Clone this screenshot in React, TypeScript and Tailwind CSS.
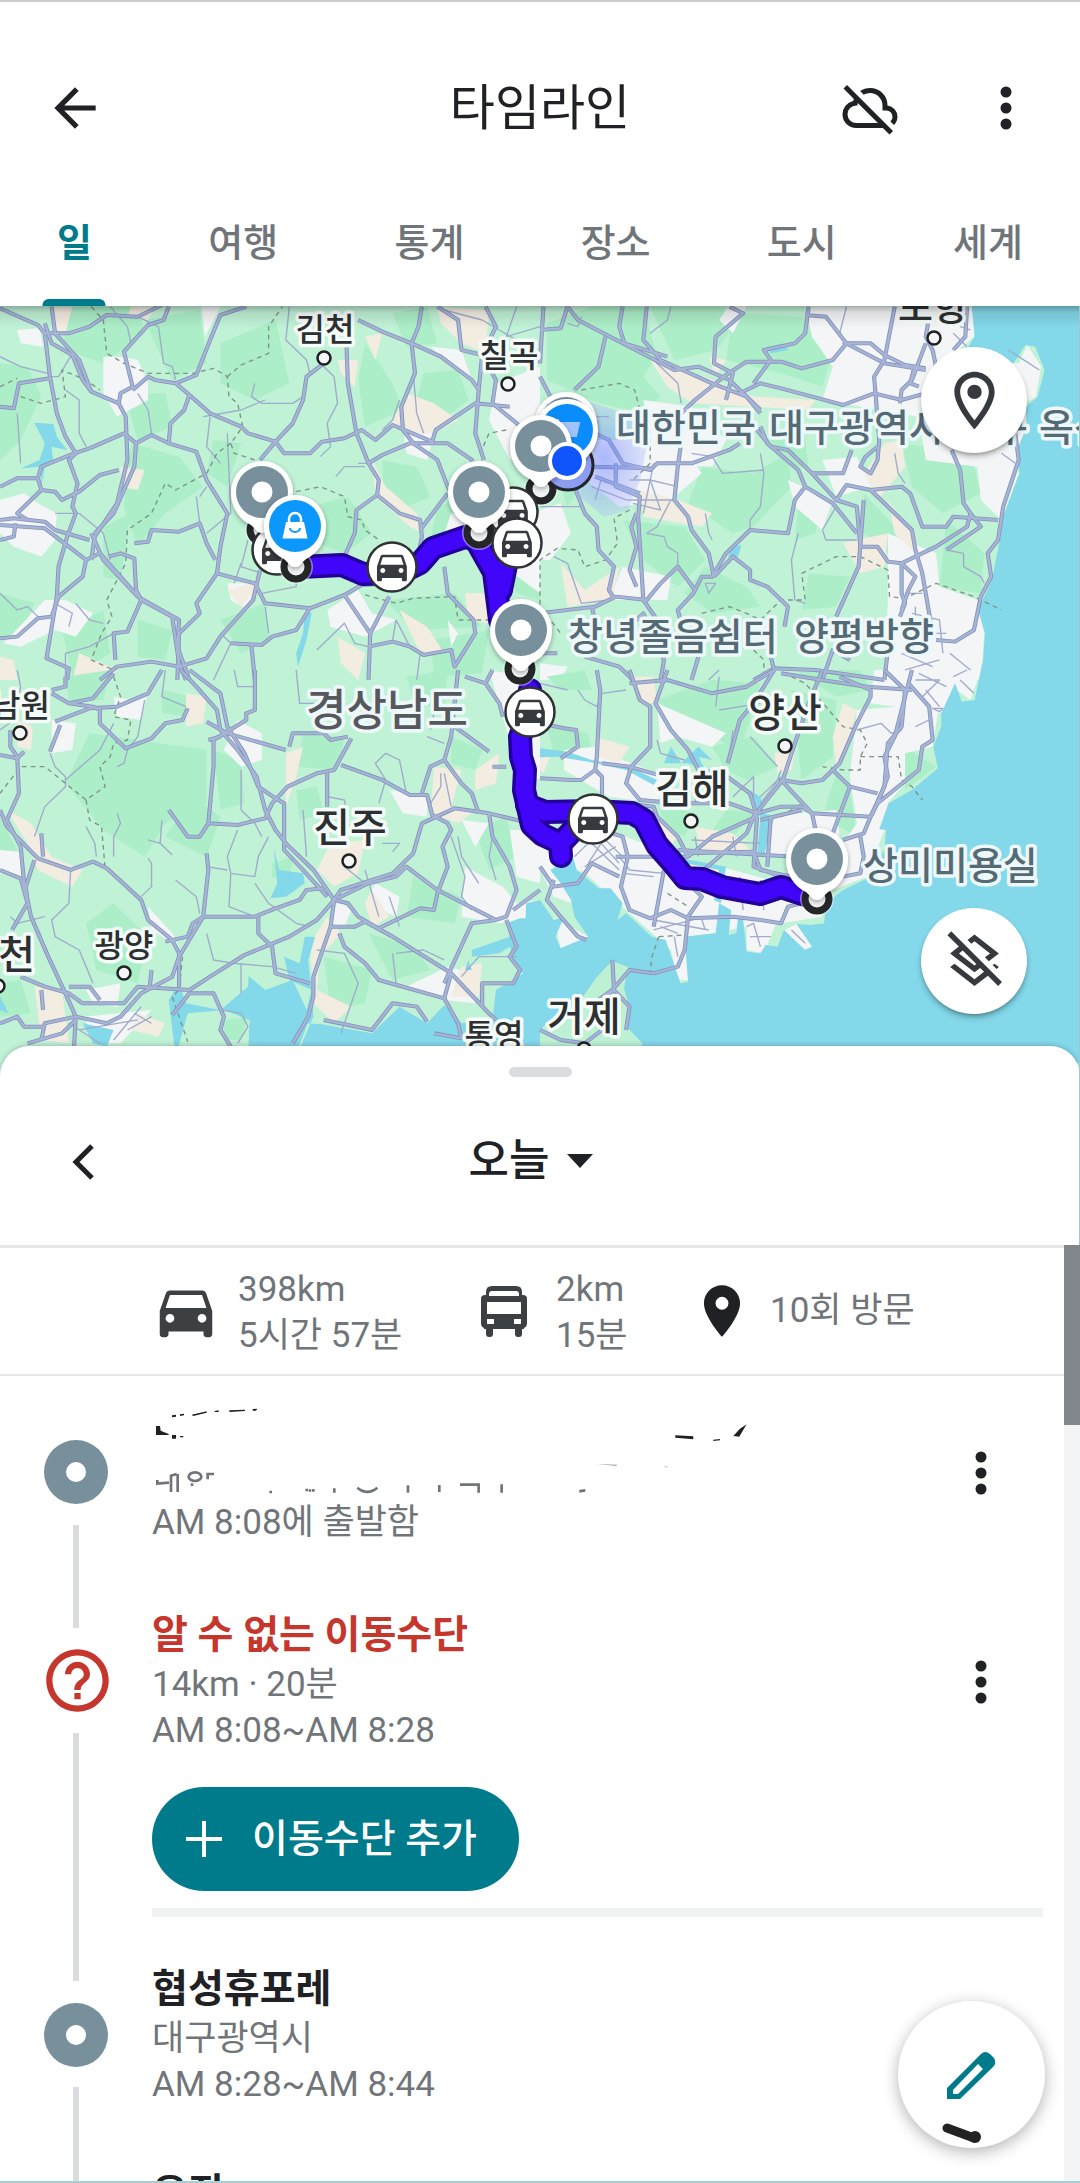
import React from "react";
import {
  MdArrowBack,
  MdHelpOutline,
  MdLocationOn,
  MdOutlineLocationOn,
  MdOutlineLayersClear,
  MdDirectionsCar,
} from "react-icons/md";

const FONT = "font-[Roboto,'Noto_Sans_CJK_KR',sans-serif]";
const MAP_FONT = "Roboto, 'Noto Sans CJK KR', sans-serif";

/* ---------- map data: four tiles, each drawn in a 1568-unit wide grid ---------- */

type Tile = {
  transform: string;
  deep: string[];
  gray: string[];
  sand: string[];
  water: string[];
  major: string[];
  minor: string[];
  dashed: string[];
};

const northWest: Tile = {
  transform: "translate(0 300) scale(0.3444 0.3333)",
  deep: [
    "M170 20L400 20L420 100L300 190L190 150Z",
    "M420 60L580 30L600 190L500 240L450 130Z",
    "M0 190L80 200L120 290L60 420L0 480Z",
    "M380 430L520 470L590 560L480 640L400 740L360 620Z",
    "M300 680L380 640L350 840L300 830Z",
    "M360 280L480 280L500 380L400 420Z",
    "M640 130L800 60L840 250L740 300L640 250Z",
    "M1060 130L1140 250L1170 330L1060 380L1040 240Z",
    "M1140 40L1240 20L1270 130L1180 140Z",
    "M1230 220L1330 210L1360 300L1260 380L1210 300Z",
    "M1110 480L1210 500L1250 590L1180 620L1110 590Z",
    "M900 620L1010 590L1080 700L1000 760L920 730Z",
    "M0 880L100 910L60 1000L0 1010Z",
    "M640 960L770 910L780 1020L700 1060Z",
    "M1250 1020L1420 990L1400 1120L1260 1130Z",
    "M620 420L700 430L660 560L600 520Z",
    "M180 990L300 930L320 1060L210 1130Z",
    "M1120 900L1320 880L1400 980L1200 990Z",
    "M1270 620L1330 600L1320 690L1250 720Z",
    "M400 960L500 990L480 1080L400 1070Z",
    "M1420 640L1560 700L1568 900L1500 880Z",
  ],
  gray: [
    "M50 90L115 85L125 140L60 130Z",
    "M300 170L350 170L400 180L430 250L430 300L340 350L300 280Z",
    "M585 20L640 20L620 60L595 110Z",
    "M0 600L70 580L110 610L165 640L160 720L120 770L40 740L0 700Z",
    "M190 900L270 940L220 1010L160 990L60 1040L10 1030L130 900Z",
    "M1250 140L1340 150L1370 240L1300 190Z",
    "M1440 250L1568 200L1568 420L1480 480L1420 360Z",
    "M950 930L1040 870L1080 940L1150 960L1060 1010L960 980Z",
    "M660 850L740 850L720 930L670 900Z",
    "M1310 640L1350 650L1330 720L1290 700Z",
    "M1170 380L1260 400L1240 480L1180 460Z",
    "M1480 600L1568 640L1568 880L1490 820Z",
    "M1300 960L1330 1000L1310 1040Z",
  ],
  sand: [
    "M150 20L210 20L190 100L160 90Z",
    "M380 20L450 20L430 60L370 50Z",
    "M1060 110L1110 100L1090 180Z",
    "M980 180L1040 180L1030 260L990 220Z",
    "M1270 20L1420 30L1410 160L1340 130L1280 70Z",
    "M1180 280L1260 310L1330 360L1260 400L1190 400L1130 380Z",
    "M350 500L420 510L400 570L350 560Z",
    "M1080 480L1120 560L1210 640L1230 700L1190 680L1090 590Z",
    "M1160 930L1240 980L1290 1060L1220 1060Z",
    "M1350 880L1410 880L1420 970L1360 960Z",
    "M0 1070L40 1080L50 1140L0 1140Z",
    "M660 870L760 840L700 920Z",
    "M980 1010L1060 1060L1040 1140L990 1090Z",
    "M230 1060L340 1110L320 1140L210 1140Z",
  ],
  water: [
    "M100 368L155 372L165 410L195 450L150 440L155 490L130 500L120 560L120 500L60 505L115 480L130 430L115 400Z",
    "M885 935L905 940L890 1020L865 1100L860 1060L880 1000Z",
  ],
  major: [
    "M0 25L110 75L130 100L145 230L165 340L190 410L220 460L200 480L225 550L210 620L220 640L195 710L170 800L165 890L135 1075L200 1105L195 1140",
    "M150 20L160 100L230 180L265 275L345 310L365 350L370 480L340 610L275 710L265 780",
    "M130 70L150 130L210 165L240 240L265 275",
    "M130 100L200 100L260 80L310 45L400 50L470 15",
    "M490 20L475 60L430 75L360 155L385 260L350 280L345 310",
    "M385 270L430 230L450 240L510 250L550 285L610 340L700 380L720 400L800 425L825 460L900 460L935 425L1000 415L1050 390L1090 420L1140 375L1220 410L1255 425L1265 390L1380 310L1480 320",
    "M510 250L570 225L610 120L640 45L715 20",
    "M550 285L535 330L495 370L490 430L570 455L600 540L660 640L640 740L630 820L570 910L580 940L520 1000L515 1140",
    "M490 430L440 405L395 430L360 400L260 445L215 460",
    "M395 430L390 500L330 640L275 700",
    "M940 190L890 230L880 300L850 370L800 425L755 480",
    "M1005 100L1010 250L1035 400L1070 490L1100 540L1095 585L1035 630L1030 700L1000 770L890 770",
    "M1070 490L1110 465L1190 430L1300 430L1370 480L1400 560",
    "M1095 585L1160 640L1220 660L1225 710L1210 790",
    "M1300 580L1220 690",
    "M1225 20L1215 80L1195 130L1205 220L1165 320L1170 390L1200 430L1270 480L1300 560L1340 640",
    "M1040 60L1110 95L1195 130L1280 170L1370 240L1390 270L1380 400L1405 480",
    "M1270 20L1330 60L1340 150L1400 165L1440 240L1430 310L1500 370L1540 400",
    "M1410 20L1440 80L1400 165L1390 270",
    "M0 660L40 655L130 665L160 690L260 720",
    "M0 675L130 685L200 740L250 780L290 760L410 900L500 950L520 1090L540 1140",
    "M265 700L300 780L400 890L520 960L515 1040L550 1140",
    "M0 1015L50 1010L110 955L150 950L170 890L240 830L250 780",
    "M0 560L50 535L110 535L120 500L215 460",
    "M110 535L120 570L50 640L80 660",
    "M120 570L160 575L180 600L230 575L290 525L345 510",
    "M315 770L350 760L390 775L395 870L410 900L370 995L330 1000L335 1080",
    "M390 730L430 725L440 690L520 695L580 670L600 730L625 780",
    "M630 820L740 850L770 910L900 925L1000 885L1050 855L1140 850",
    "M755 810L735 900L640 1010L600 1075L520 1100",
    "M290 1140L340 1100L440 1085L520 1100",
    "M670 1030L760 1035L790 1010L860 990L900 925",
    "M730 1035L740 1140",
    "M1000 885L1075 1000L1070 1140",
    "M1130 890L1075 1000",
    "M1070 1040L1140 1025L1190 1040L1230 1065L1310 1050L1320 1100L1380 1000L1375 960L1300 880L1290 800",
    "M0 320L40 325L55 250L145 235",
    "M0 720L40 710L45 670",
  ],
  minor: [
    "M320 20L370 80L380 130L360 160",
    "M400 50L460 80L475 190L500 200L510 240",
    "M840 20L830 120L890 180L900 220",
    "M740 250L730 290L760 310L850 310L880 290",
    "M590 350L700 330L770 300",
    "M610 350L600 440L640 490",
    "M930 190L970 230L980 310L950 370L960 440L930 470",
    "M1200 220L1210 340L1230 400",
    "M1160 300L1140 360L1110 390",
    "M50 340L60 490",
    "M190 270L230 300L230 400L250 440",
    "M400 280L430 330L440 400",
    "M165 110L210 160L170 230L150 230",
    "M0 880L50 930L80 920L110 950",
    "M160 910L210 940L200 980M220 910L260 960L300 970",
    "M570 590L580 670M600 560L580 590",
    "M770 920L780 1000M760 880L860 860L860 840",
    "M1040 490L1070 490M975 530L1000 500L1060 500",
    "M920 1050L1000 970L1030 1030L1070 1040",
    "M1150 960L1190 1040M1150 960L1140 1020",
    "M1500 20L1470 110L1568 80",
    "M1290 30L1400 60L1500 120",
    "M320 780L300 700L230 640L160 640",
    "M190 1140L190 1060L260 1040L330 1000",
    "M620 1140L670 1030L640 1000",
    "M700 790L680 850M720 720L700 800L760 820",
    "M0 170L60 200L140 220",
    "M1220 1060L1210 1140",
    "M660 400L670 640L600 700",
  ],
  dashed: [
    "M265 20L300 60L310 160L360 190L430 220L560 220L620 205L660 230L665 290L690 310L705 380L670 430L680 460L740 480",
    "M660 230L700 195L780 160L780 80L820 20",
    "M0 260L50 235M60 290L120 310L190 290L180 210L250 240L290 270",
    "M670 430L630 460L600 520L510 570L480 550L440 640L370 690L365 790L310 900L325 950L295 1000L265 1080L330 1110",
    "M860 575L930 560L1000 590L1010 650L1050 660L1060 690L1100 720",
    "M1060 885L1150 910L1200 895L1320 890L1330 960L1420 960",
    "M1470 390L1420 400L1390 470",
  ],
};

const northEast: Tile = {
  transform: "translate(540 300) scale(0.3444 0.3333)",
  deep: [
    "M20 70L150 20L300 20L340 170L300 230L350 290L300 340L170 310L20 240Z",
    "M320 20L520 20L580 60L510 150L390 180Z",
    "M560 40L760 50L850 160L820 260L700 220L540 180Z",
    "M470 500L620 520L720 460L730 560L620 680L560 700L430 610Z",
    "M750 620L820 610L800 700L740 720Z",
    "M1050 430L1250 460L1280 580L1170 640L1080 560Z",
    "M940 580L1040 690L1010 760L940 700Z",
    "M480 800L600 860L640 920L500 940L420 880Z",
    "M780 820L900 830L860 920L760 930Z",
    "M240 660L420 680L480 780L400 860L300 780Z",
    "M60 560L120 560L80 620Z",
    "M1000 160L1050 150L1040 270L1000 260Z",
    "M650 420L770 410L780 510L700 480Z",
    "M1180 660L1290 760L1280 880L1160 860Z",
  ],
  gray: [
    "M770 20L1260 20L1260 110L1180 180L1390 190L1415 135L1455 200L1440 290L1405 310L1405 400L1385 500L1390 520L1340 660L1280 600L1270 500L1120 480L1100 350L820 300L850 200L790 110Z",
    "M100 420L400 420L470 520L380 600L230 620L60 480Z",
    "M300 300L440 320L540 420L500 500L330 490Z",
    "M720 540L850 600L820 690L740 620Z",
    "M1010 700L1150 760L1160 860L1270 900L1290 1000L1280 1140L1000 1140L1010 900Z",
    "M240 800L380 830L370 900L200 900Z",
    "M0 630L60 610L90 700L30 780L0 780Z",
    "M560 0L520 60L560 100L600 20Z",
    "M0 420L60 460L40 560L0 560Z",
    "M820 480L920 470L960 560L860 590Z",
    "M0 1090L80 1100L60 1140L0 1140Z",
  ],
  sand: [
    "M320 180L480 230L620 290L800 300L780 330L620 320L440 310L370 260Z",
    "M1000 430L1050 420L1060 500L980 600L940 520Z",
    "M290 570L400 600L500 640L470 680L300 650Z",
    "M60 790L130 870L230 800L210 900L80 920Z",
    "M880 730L1010 700L1000 800L930 820Z",
    "M1010 600L1080 700L1090 760L1030 700Z",
    "M490 170L540 180L510 230Z",
  ],
  water: [
    "M660 140L710 130L720 150L670 160Z",
    "M545 770L560 740L585 735L575 770Z",
    "M1250 -20L1262 110L1218 180L1375 190L1410 135L1438 140L1465 210L1445 290L1410 320L1413 380L1385 450L1392 520L1345 650L1335 720L1312 840L1272 930L1292 1000L1282 1150L1600 1150L1600 -20Z",
  ],
  major: [
    "M0 90L60 85L80 20",
    "M80 20L110 60L240 130L390 210L460 200L550 240L640 330",
    "M190 110L170 200L100 270",
    "M240 20L230 80L245 130L370 170",
    "M310 20L300 120L350 180L500 250L600 290L640 340",
    "M550 20L590 40L510 110L505 190L560 220L540 300",
    "M780 20L770 100L740 130L650 150L670 180L620 250",
    "M770 45L830 50L890 130L850 180L760 205L700 185L600 185L540 225L450 300L410 340",
    "M890 130L960 130L1000 165L1060 195L1120 205",
    "M880 125L1000 190L1120 210",
    "M1030 20L1000 180L970 230L975 290L985 420L980 480L960 520L930 500L945 470L980 440",
    "M1130 50L1120 110L1140 150L1150 200",
    "M1120 130L1080 240L1050 270L1045 310",
    "M1085 210L1075 250L1100 260",
    "M1240 20L1235 110L1200 150",
    "M580 280L640 250L700 265L790 290L880 315L970 280L1050 300L1120 280",
    "M0 230L30 290M0 190L10 20",
    "M160 400L200 420L240 490L320 510L340 490L440 490L550 450L580 430",
    "M150 500L320 505",
    "M410 430L400 500L390 600L430 650L440 690L490 760L505 830",
    "M220 490L220 560L290 590L285 650L300 900L340 960",
    "M100 560L130 640L165 680L170 750L215 800L200 870L215 895",
    "M160 530L290 580",
    "M630 390L670 440L720 450L790 520L860 600L920 620L930 740L925 800L860 950",
    "M640 380L660 430L750 510L770 560L850 610L920 700",
    "M770 560L740 600L720 700L610 690L540 760L500 830L470 830L445 880L400 930L410 970",
    "M505 830L560 770L610 810L610 840L660 860L720 920L710 980",
    "M790 520L880 520L905 450",
    "M860 600L890 555L960 570L1050 560L1075 580L1110 680L1180 680L1200 650L1330 660",
    "M960 570L1080 690L1090 750L1110 820L1140 1000",
    "M940 600L930 740L980 740L1010 785L1050 790L1150 740L1240 680L1250 640",
    "M1050 790L1050 880L1060 910L1045 950",
    "M1195 450L1220 510L1230 610L1250 640L1280 680L1180 750",
    "M1380 400L1390 480L1345 620L1330 720L1300 760L1310 830L1280 890L1260 990L1205 1025L1150 1020",
    "M280 640L265 680L280 740L260 810L280 860",
    "M0 940L160 920L220 890L310 900L350 850L400 800L450 870",
    "M150 920L160 960M0 1060L50 1060",
    "M200 1040L300 940L360 1080L350 1140",
    "M130 1070L230 1100L270 1140",
    "M820 1140L850 1050L900 1080M620 1140L680 1105L800 1110L1000 1140",
    "M460 1070L440 1140M670 1070L680 1110M1010 1050L1000 1140",
    "M1050 790L1090 830L1070 870L1050 930",
  ],
  minor: [
    "M330 180L400 250L410 310",
    "M380 20L370 60L320 100",
    "M890 20L870 100",
    "M640 460L650 520L640 620L610 660L610 690",
    "M440 460L500 470L530 520L650 510",
    "M480 640L490 700L500 720",
    "M750 700L730 780L740 900L770 910",
    "M380 600L340 680L310 700",
    "M310 700L360 710L370 740L400 760L400 800",
    "M820 690L830 720L920 720M860 620L820 690",
    "M1030 460L1040 520L1060 550",
    "M40 770L80 790L120 910L200 900",
    "M1180 750L1230 760L1230 800L1280 830L1290 850",
    "M1340 460L1380 490",
    "M1060 880L1110 880M1080 940L1160 960L1170 1060M1090 920L1090 1000L1180 1000",
    "M150 560L250 600L390 600M180 530L160 600M320 540L350 630L270 610",
    "M260 540L320 540L400 560M330 490L300 640",
    "M0 620L120 620M80 70L110 80L120 50",
    "M200 350L160 350M300 330L320 400",
    "M520 1110L490 1140M1050 1060L1140 1100M1060 1110L1160 1080M1190 1060L1250 1110",
    "M1200 100L1240 140M1220 80L1250 90M1360 150L1450 210",
    "M480 850L510 850L490 880Z",
  ],
  dashed: [
    "M120 270L230 250L275 270L290 330L320 390L320 490L270 540",
    "M260 630L215 655L225 730L190 780L130 800L110 750L50 745L0 780L0 920L60 1000",
    "M470 940L550 920L600 940L640 960L700 900L770 900L760 820L860 770L930 770L1010 810L1015 890L1060 895L1150 850L1260 890L1340 930",
    "M620 1050L650 1080L650 1140",
  ],
};

const southWest: Tile = {
  transform: "translate(0 670) scale(0.3444 0.3333)",
  deep: [
    "M260 190L600 240L600 400L480 460L420 560L300 480L190 340Z",
    "M620 240L700 270L710 400L640 420Z",
    "M0 440L60 560L0 540Z",
    "M190 20L320 0L300 90L200 90Z",
    "M470 60L560 80L550 140L470 130Z",
    "M860 360L920 350L940 430L870 450Z",
    "M940 860L1080 900L1060 1000L960 1020Z",
    "M1070 790L1200 830L1250 900L1140 930Z",
    "M650 1050L720 1040L700 1110L650 1110Z",
    "M880 190L1000 200L980 300L860 290Z",
    "M1180 20L1300 0L1290 130L1200 90Z",
    "M1310 200L1400 240L1380 300L1310 280Z",
    "M250 760L330 700L430 800L400 940L280 900Z",
    "M790 580L850 560L840 640L790 620Z",
    "M1380 480L1470 440L1500 560L1420 600Z",
    "M560 380L640 440L600 560L480 500Z",
    "M0 940L60 930L90 1030L0 1040Z",
    "M1200 620L1340 680L1320 760L1180 740Z",
  ],
  gray: [
    "M0 540L60 545L70 620L0 610Z",
    "M430 710L500 790L520 830L440 780Z",
    "M330 80L380 90L430 60L410 150L340 140Z",
    "M150 150L220 160L210 240L150 250Z",
    "M690 150L760 190L760 270L700 290L650 240Z",
    "M1130 360L1240 380L1240 440L1170 430Z",
    "M1350 590L1460 650L1500 700L1568 690L1568 740L1450 760L1340 740Z",
    "M1480 480L1568 480L1568 640L1500 620Z",
    "M1340 450L1420 460L1380 530Z",
    "M1180 950L1300 890L1370 910L1380 1000L1290 990Z",
    "M250 960L350 940L340 1010L270 1000Z",
    "M1090 640L1160 680L1150 740L1060 700Z",
    "M240 1040L440 1020L350 1120L290 1120Z",
    "M980 690L1020 720L1000 770L960 760Z",
    "M1420 0L1520 20L1568 100L1568 330L1500 280Z",
  ],
  sand: [
    "M20 420L90 460L150 560L240 600L210 650L110 600L80 520Z",
    "M540 70L600 80L590 160L540 170Z",
    "M50 150L95 170L90 240L50 230Z",
    "M830 250L880 230L860 320L830 410Z",
    "M1260 290L1340 300L1310 410L1380 420L1330 460L1250 430Z",
    "M960 520L1060 510L1040 610L970 650L920 600Z",
    "M900 820L950 740L990 790L930 860L920 960L1020 1010L970 1060L910 1000Z",
    "M1380 300L1450 250L1440 340L1380 360Z",
    "M100 950L180 960L200 1120L120 1110Z",
    "M1340 890L1400 880L1390 980L1310 980Z",
    "M1080 660L1130 740L1080 770L1060 700Z",
    "M400 1030L480 1060L460 1100L380 1080Z",
  ],
  water: [
    "M1600 745L1510 745L1470 760L1480 800L1370 840L1370 860L1450 850L1480 830L1505 900L1520 910L1440 960L1430 1050L1340 1060L1290 1005L1240 1060L1160 1010L1080 1090L930 1062L880 1060L905 960L840 930L825 860L870 880L885 800L915 800L895 870L905 960L910 1040L860 1160L720 1160L725 1050L650 1020L545 1030L510 1160L490 990L520 940L540 1000L640 1020L720 950L722 918L770 960L850 930L900 1040L850 1180L1600 1180Z",
    "M795 535L810 600L880 610L885 640L830 680L785 685L805 640Z",
    "M1350 900L1360 870L1370 900Z",
    "M240 1060L330 1080L310 1130L270 1120Z",
    "M0 980L25 1030L0 1020Z",
  ],
  major: [
    "M190 20L190 50L150 60M150 70L200 100L270 85L330 10",
    "M160 155L260 115L340 110L430 70L470 0",
    "M200 100L270 110L290 120L290 160L365 235L440 205L480 160L530 150L545 115",
    "M145 245L175 165",
    "M30 180L30 230L50 260L55 370L20 450L60 530L70 640L90 740L140 860L190 970L220 1040L215 1130",
    "M0 420L20 470L110 565L205 600L270 575L310 595L410 690L430 750L500 810L520 850L520 950",
    "M100 570L75 650L80 700L35 780",
    "M0 600L60 625L80 700",
    "M0 255L50 265L70 245",
    "M525 0L570 50L630 120L640 180L690 240L745 320L770 420L800 480L830 520L910 600L970 690",
    "M550 0L640 70L660 170L710 250L750 350L800 385L825 400L825 540L880 600L950 680",
    "M740 0L740 120L715 130L715 150L620 210L620 290L605 460L690 465L770 445L790 400L835 350L920 310L970 300L1020 205",
    "M605 210L640 200M600 155L660 190L830 240",
    "M490 420L545 500L580 500L605 460",
    "M990 285L1110 330L1190 375L1240 375L1255 435L1300 460L1310 480L1285 530L1300 590L1270 670L1260 720L1220 715L1100 775",
    "M950 310L950 410M840 230L850 190L940 190L960 210L1010 200",
    "M1330 0L1310 200L1290 270L1250 290L1225 370",
    "M1290 270L1340 340L1370 370L1390 430",
    "M970 690L990 660L1140 610L1200 550L1225 460L1320 415L1420 430L1540 460",
    "M970 690L960 770L910 920L910 980L895 1040L850 1120",
    "M980 685L1070 640L1150 620L1180 590L1270 660L1440 750L1470 740L1500 660L1480 590L1430 500L1420 430",
    "M970 690L1010 700L1040 740L1140 800L1310 910L1410 1020L1440 1050",
    "M970 690L920 750L840 800L710 855L610 920L550 960L400 950L360 1000L240 1000L200 970L130 950L60 920",
    "M590 740L520 860L500 920L410 970L350 1040L310 1060L220 1040L130 1060L120 1110",
    "M600 550L605 600L590 740L560 760L545 800L480 815",
    "M590 740L740 740L800 715L870 690L890 660L940 655",
    "M750 740L750 790L790 830L800 910L900 940",
    "M960 770L1030 770L1060 755L1140 800",
    "M985 790L1000 830L1060 880L1100 930L1290 985L1330 1060L1340 1105L1260 1090",
    "M1310 910L1290 985M1440 750L1370 760L1330 850L1290 940",
    "M1470 750L1500 830L1480 860L1510 900L1490 940L1400 940L1400 1010",
    "M940 1050L1080 1080L1140 1000L1210 1010L1240 1055",
    "M500 1035L550 970L620 970L650 1040L640 1080L670 1130",
    "M0 1060L50 1040L70 1070L130 1070M200 950L260 950L290 990",
    "M80 1120L180 1090L220 1050M120 960L125 1020",
    "M1350 20L1410 40L1430 0M1410 40L1450 100L1460 140",
    "M1320 170L1420 245M1430 290L1470 290",
    "M1490 720L1568 660M120 490L125 560M440 900L435 950",
  ],
  minor: [
    "M0 180L40 150L60 50L50 0",
    "M420 90L400 200L370 240L360 280L340 290",
    "M145 250L160 290L190 320L190 350L130 410L100 500",
    "M190 330L290 240L330 160",
    "M340 430L350 460L330 500L330 560M250 470L275 520L280 560",
    "M205 600L200 700L150 750L160 800L230 840L270 940",
    "M430 565L440 580L440 650L410 680",
    "M430 510L465 520L500 555M465 520L470 450",
    "M700 300L700 420L740 460L760 500",
    "M690 480L660 560L670 610L740 620L750 560L780 500",
    "M670 610L665 710L740 740M600 590L660 600",
    "M740 640L780 700L860 760L900 770",
    "M600 790L620 870L680 880L790 890L860 910",
    "M880 420L890 560M950 380L1000 390L1010 450",
    "M1100 400L1120 330L1090 280L1120 250L1160 270L1180 370",
    "M1330 500L1340 560L1390 640M1430 500L1420 560L1440 630",
    "M1310 500L1350 620L1340 680L1370 720",
    "M1060 600L1100 740M1130 680L1160 770",
    "M1140 850L1150 940L1200 960M1150 850L1230 840L1290 870",
    "M1240 200L1290 220M1250 400L1280 350L1280 310M1310 410L1290 310",
    "M920 840L1000 850L1040 940L1020 1000L990 1090",
    "M640 1020L700 1030L720 1070L690 1120",
    "M480 0L470 80L540 110M680 0L690 50L740 50",
    "M860 0L870 100L940 100M1250 180L1260 130",
    "M1500 860L1390 860L1340 920",
    "M510 630L570 680L580 730M700 880L700 970",
    "M200 1060L290 1120M230 1080L400 1050M390 1030L440 1060M410 1010L330 1110M370 1080L440 1040",
    "M1110 520L1160 520L1140 545M1000 590L1060 640",
    "M30 740L50 760L130 740",
  ],
  dashed: [
    "M330 20L350 80L330 140L380 150L370 210L330 220L320 260L290 290L305 350L250 390L190 340L130 290L60 290L0 370",
    "M250 390L260 450L295 470L305 595",
    "M530 860L520 960L500 980L520 1040L545 1115",
  ],
};

const southEast: Tile = {
  transform: "translate(540 670) scale(0.3444 0.3333)",
  deep: [
    "M20 170L140 190L150 240L40 250Z",
    "M340 90L500 30L640 40L580 250L480 180L360 110Z",
    "M500 230L620 200L690 290L600 330L540 300Z",
    "M730 60L860 90L850 260L760 330Z",
    "M540 420L620 430L560 500L490 500Z",
    "M1060 230L1150 290L1060 360Z",
    "M860 310L900 360L920 500L820 440Z",
    "M210 870L260 890L230 960L205 940Z",
    "M0 1100L180 1070L260 1130L0 1140Z",
    "M80 1000L120 960L165 900L160 960Z",
    "M20 20L130 0L150 60L60 60Z",
    "M740 0L930 0L960 60L860 80Z",
    "M340 400L450 430L420 500L370 480Z",
    "M300 600L360 600L350 660L300 640Z",
  ],
  gray: [
    "M340 100L540 190L500 230L400 200L350 220Z",
    "M70 240L160 230L240 270L370 320L340 400L200 380L70 300Z",
    "M0 500L200 480L400 560L560 600L700 640L820 740L700 760L600 770L500 790L420 800L430 930L400 930L380 840L250 720L120 600L90 700L40 680L0 600Z",
    "M920 120L1160 100L1140 230L1060 250L1060 340L1010 400L1000 480L950 620L850 660L880 520L920 460L900 320Z",
    "M970 0L1280 0L1250 90L1210 60L1165 130L960 100Z",
    "M640 440L860 420L870 500L740 560L640 560Z",
    "M600 760L690 750L650 850L600 840Z",
    "M710 780L745 762L790 830L760 840Z",
    "M40 740L140 800L60 835Z",
    "M20 815L45 830L30 838Z",
  ],
  sand: [
    "M160 200L260 230L230 280L170 260Z",
    "M850 200L880 100L920 120L900 200L860 290Z",
    "M680 250L740 240L730 300L690 310Z",
    "M260 20L330 20L340 100L300 100Z",
    "M450 470L560 490L620 550L470 550Z",
    "M330 430L400 500L370 540L330 500Z",
    "M0 240L30 260L10 310L0 300Z",
  ],
  water: [
    "M1284 -20L1262 90L1225 95L1205 40L1165 130L1165 170L1142 230L1155 295L1080 360L1012 400L985 478L1005 480L1000 540L960 620L880 660L830 700L825 760L785 765L745 762L790 830L770 840L708 780L690 830L655 825L640 850L600 845L590 750L575 740L570 790L548 795L555 720L520 700L510 790L420 800L430 935L408 940L378 850L365 810L325 800L250 730L225 750L240 700L205 655L170 655L130 620L110 600L90 690L100 740L140 800L60 835L45 800L70 740L40 750L0 690L-40 700L-60 1180L1600 1180L1600 -20Z",
    "M0 235L80 245L150 270L260 290L340 330L330 345L250 300L140 275L50 260L0 262Z",
    "M360 280L380 230L410 280L460 230L500 270L460 260L480 300L430 280Z",
    "M560 330L640 380L650 430L680 440L650 560L630 560L640 440L600 370Z",
    "M390 560L540 590L525 700L505 690L520 600L400 575Z",
    "M30 600L95 560L110 610L90 690L60 640Z",
  ],
  major: [
    "M165 0L175 60L165 260L160 300L120 330L90 330L0 325",
    "M160 300L180 320L180 380M180 280L260 290L360 320",
    "M260 0L290 90L320 110L320 230L265 290L250 340L290 390L400 400L550 400L630 430L700 410L760 410L790 430L960 440",
    "M370 0L335 100L380 180L430 240L460 300L530 310L610 370L630 440",
    "M260 40L370 30L500 70L600 50L680 0",
    "M680 0L620 100L580 150L545 280",
    "M700 10L850 35L950 50L1080 60",
    "M820 0L780 100L740 220L705 330L620 440L600 490L520 560L430 640",
    "M870 20L960 60L960 80L920 160L870 280L820 330L760 340L700 330L790 430L800 480",
    "M1000 0L1060 60L1050 170L1010 220L1000 350L960 440L940 490L880 510",
    "M1070 40L1130 110L1140 210L1110 230L1100 300L980 400L960 440",
    "M1080 0L1060 80L1030 200L1000 260L1010 320L980 400",
    "M850 300L900 350L980 370M900 350L850 490",
    "M630 440L500 500L430 560L220 560",
    "M400 540L740 560M420 550L620 545L640 600L730 620",
    "M630 440L620 590L700 620",
    "M670 440L660 590M640 450L760 420",
    "M180 480L240 500L255 560L235 650L260 720L320 745L380 720L430 745L560 740L640 750L700 760L720 710L800 690",
    "M430 640L470 680L430 740L420 840L400 890L330 910L260 900L210 960L170 990",
    "M0 590L40 650L110 640L150 580L230 620M40 630L20 690L60 740L110 800L135 810",
    "M210 870L215 960L170 1000M215 960L260 1010L250 1080",
    "M0 1080L60 1110L130 1120L180 1080",
    "M0 160L70 175L105 180L110 230L60 265",
    "M360 600L330 770M250 400L330 410L340 440L400 500L430 560",
    "M930 500L940 560L930 610L880 620",
  ],
  minor: [
    "M110 60L130 90L165 110L180 70L250 60",
    "M340 210L350 250L420 270M520 20L510 110",
    "M610 200L690 290M560 180L550 260",
    "M100 560L160 500L230 580M130 590L220 530M170 490L240 560M150 520L230 600M190 500L140 580",
    "M640 380L690 330L700 300M640 400L700 320M560 380L620 320L620 380",
    "M600 770L620 760L640 830M610 800L670 800",
    "M330 750L490 780M330 780L480 740M350 770L400 790M470 750L480 780",
    "M450 500L460 560M440 510L640 520M560 500L570 560",
    "M920 180L990 160L1020 190L1050 180",
    "M1090 30L1160 30L1110 80M1100 10L1180 50M1120 60L1160 110M1140 115L1170 115L1160 125Z",
    "M1200 20L1240 0M1220 30L1260 70",
    "M1090 170L1130 150M580 620L590 720M640 630L650 720M600 640L700 680L740 700",
    "M230 560L260 600L360 610M240 610L330 620",
    "M520 120L640 100M0 40L80 60",
    "M390 800L400 860M730 780L770 820",
    "M500 360L520 400M460 320L450 400",
  ],
  dashed: [
    "M730 20L770 40L830 110L880 170L930 180L950 220L930 260L930 300L880 300L820 290M930 260L1040 260L1050 330L1080 350L1110 390",
    "M700 440L760 400M345 800L325 860L318 920M345 800L420 795M370 670L430 710",
  ],
};

const tiles = [northWest, northEast, southWest, southEast];

function TileFills({ tile }: { tile: Tile }) {
  return (
    <g transform={tile.transform}>
      {tile.deep.map((d) => <path key={d} d={d} fill="#aceec8" />)}
      {tile.gray.map((d) => <path key={d} d={d} fill="#f4f5f7" />)}
      {tile.sand.map((d) => <path key={d} d={d} fill="#f3ece1" />)}
    </g>
  );
}

function TileRoads({ tile }: { tile: Tile }) {
  return (
    <g transform={tile.transform} fill="none" strokeLinejoin="round">
      {tile.minor.map((d) => <path key={d} d={d} stroke="#a0abcd" strokeWidth="4" />)}
      {tile.dashed.map((d) => <path key={d} d={d} stroke="#7f9488" strokeWidth="4" strokeDasharray="14 12" />)}
      {tile.major.map((d) => <path key={d} d={d} stroke="#8593bb" strokeWidth="12" />)}
      {tile.major.map((d) => <path key={d} d={d} stroke="#a6b5d6" strokeWidth="7" />)}
    </g>
  );
}

const CAR =
  "M18.92 6.01C18.72 5.42 18.16 5 17.5 5h-11c-.66 0-1.21.42-1.42 1.01L3 12v8c0 .55.45 1 1 1h1c.55 0 1-.45 1-1v-1h12v1c0 .55.45 1 1 1h1c.55 0 1-.45 1-1v-8l-2.08-5.99zM6.5 16c-.83 0-1.5-.67-1.5-1.5S5.67 13 6.5 13s1.5.67 1.5 1.5S7.33 16 6.5 16zm11 0c-.83 0-1.5-.67-1.5-1.5s.67-1.5 1.5-1.5 1.5.67 1.5 1.5-.67 1.5-1.5 1.5zM5 11l1.5-4.5h11L19 11H5z";

function CarBadge({ x, y }: { x: number; y: number }) {
  return (
    <g transform={`translate(${x} ${y})`}>
      <circle r="24.500" fill="#fff" stroke="#303134" strokeWidth="2.500" />
      <path d={CAR} fill="#36393d" transform="translate(-20 -20.5) scale(1.66)" />
    </g>
  );
}

function Ring({ x, y }: { x: number; y: number }) {
  return (
    <g>
      <circle cx={x} cy={y} r="17" fill="#fff" opacity="0.45" />
      <circle cx={x} cy={y} r="12" fill="#f1f3f4" stroke="#242628" strokeWidth="7" />
    </g>
  );
}

function Pin({ x, y, color = "#78909c", children }: { x: number; y: number; color?: string; children?: React.ReactNode }) {
  return (
    <g transform={`translate(${x} ${y})`}>
      <path
        d="M0 41C-5 41-7 36-11 33C-23 27-31 15-31 0A31 31 0 0 1 31 0C31 15 23 27 11 33C7 36 5 41 0 41Z"
        fill="#fff"
        filter="url(#pin-shadow)"
      />
      <circle r="26" fill={color} />
      {children ?? <circle r="10.500" fill="#fff" />}
    </g>
  );
}

const ROUTE = [
  "M300 567L342 565L363 574L400 573L420 563L433 548L465 537L476 540L494 572L500 620L521 665",
  "M530 543L507 560L501 590",
  "M530 690L530 712L520 737L521 757L525 770L524 790L527 803L532 825L543 835L560 843L561 856",
  "M527 805L545 812L593 811L632 813L644 820L657 845L672 862L685 878L702 879L722 887L760 894L781 887L812 897",
  "M561 843L575 828L593 820",
];

type City = { text: string; x: number; y: number; size: number; dot: [number, number]; anchor?: "middle" | "end" };

const cities: City[] = [
  { text: "김천", x: 325, y: 341, size: 32, dot: [324, 358] },
  { text: "칠곡", x: 509, y: 367, size: 32, dot: [508, 384] },
  { text: "포항", x: 933, y: 320, size: 38, dot: [934, 338] },
  { text: "남원", x: 50, y: 717, size: 32, dot: [20, 733], anchor: "end" },
  { text: "양산", x: 785, y: 727, size: 40, dot: [785, 746] },
  { text: "김해", x: 692, y: 803, size: 40, dot: [691, 821] },
  { text: "진주", x: 350, y: 842, size: 40, dot: [349, 861] },
  { text: "광양", x: 124, y: 957, size: 32, dot: [124, 973] },
  { text: "순천", x: 35, y: 969, size: 40, dot: [-2, 986], anchor: "end" },
  { text: "거제", x: 584, y: 1031, size: 40, dot: [584, 1049] },
  { text: "통영", x: 494, y: 1047, size: 32, dot: [494, 1066] },
];

function MapView() {
  return (
    <svg viewBox="0 306 1080 770" className="block w-full" role="img" aria-label="이동 경로 지도">
      <defs>
        <filter id="pin-shadow" x="-30%" y="-30%" width="160%" height="160%">
          <feDropShadow dx="0" dy="2" stdDeviation="2.5" floodOpacity="0.35" />
        </filter>
        <radialGradient id="halo">
          <stop offset="0" stopColor="#4f6bff" stopOpacity="0.45" />
          <stop offset="1" stopColor="#a9b4ff" stopOpacity="0.3" />
        </radialGradient>
        <linearGradient id="top-shade" x1="0" y1="0" x2="0" y2="1">
          <stop offset="0" stopColor="#000" stopOpacity="0.28" />
          <stop offset="0.3" stopColor="#000" stopOpacity="0.1" />
          <stop offset="1" stopColor="#000" stopOpacity="0" />
        </linearGradient>
      </defs>
      <rect x="0" y="306" width="1080" height="770" fill="#c0f2d6" />
      {tiles.map((t) => <TileFills key={t.transform} tile={t} />)}
      {tiles.map((t) => (
        <g key={t.transform} transform={t.transform} fill="#83d8ea">
          {t.water.map((d) => <path key={d} d={d} />)}
        </g>
      ))}
      {/* Geoje island and the south coast */}
      <path d="M578 1004L596 978L612 961L628 967L624 988L630 1010L628 1028L642 1043L640 1080L540 1080L540 1030L560 1010Z" fill="#bdf1d3" />
      {tiles.map((t) => <TileRoads key={t.transform} tile={t} />)}

      <path d="M560 400L590 402L640 418L648 440L640 480L628 510L604 517L560 480Z" fill="url(#halo)" />

      <g fill="none" strokeLinecap="round" strokeLinejoin="round">
        {ROUTE.map((d) => <path key={d} d={d} stroke="#23009c" strokeWidth="24" />)}
        {ROUTE.map((d) => <path key={d} d={d} stroke="#4106fa" strokeWidth="17" />)}
      </g>

      {cities.map((c) => (
        <g key={c.text}>
          <text
            x={c.x}
            y={c.y}
            textAnchor={c.anchor ?? "middle"}
            fontFamily={MAP_FONT}
            fontSize={c.size}
            fontWeight="500"
            fill="#2d3033"
            stroke="#f5fbf8"
            strokeWidth="7"
            strokeLinejoin="round"
            paintOrder="stroke"
          >
            {c.text}
          </text>
          <circle cx={c.dot[0]} cy={c.dot[1]} r="6.500" fill="#f4f5f5" stroke="#1f2123" strokeWidth="2.500" />
        </g>
      ))}
      <g fontFamily={MAP_FONT} fontSize="38" fontWeight="500" stroke="#eef8fb" strokeWidth="7" strokeLinejoin="round" paintOrder="stroke" fill="#546a74">
        <text x="306" y="726" fontSize="44" fill="#55595e">경상남도</text>
        <text y="441">
          <tspan x="616">대한민국</tspan> <tspan x="769">대구광역시</tspan> <tspan x="958">북구</tspan> <tspan x="1039">옥산로</tspan>
        </text>
        <text y="650">
          <tspan x="568">창녕졸음쉼터</tspan> <tspan x="794">양평방향</tspan>
        </text>
        <text x="863" y="879">상미미용실</text>
      </g>

      <Ring x={262} y={530} />
      <CarBadge x={277} y={550} />
      <Pin x={262} y={492} />
      <Ring x={296} y={567} />
      <CarBadge x={392} y={567} />
      <Pin x={295} y={526} color="#0b97fb">
        <path d="M-9 -4H9L12.500 12.500H-12.500Z" fill="#fff" />
        <path d="M-6 -3V-7A6 6 0 0 1 6 -7V-3" fill="none" stroke="#fff" strokeWidth="2.500" />
        <path d="M-5 2A5 4 0 0 0 5 2" fill="none" stroke="#0b97fb" strokeWidth="2" />
      </Pin>

      <Ring x={541} y={489} />
      <circle cx="568" cy="465" r="25" fill="#8c9cf0" stroke="#23252a" strokeWidth="3" />
      <Pin x={566} y={423} />
      <Pin x={567} y={430} color="#0b8cfb">
        <path d="M-15 -10H-9L-4 6H9L12 -7H-8" fill="#9fc4ff" stroke="#9fc4ff" strokeWidth="2" />
      </Pin>
      <Pin x={541} y={446} />
      <Ring x={479} y={533} />
      <CarBadge x={513} y={512} />
      <Pin x={479} y={492} />
      <CarBadge x={517} y={543} />
      <circle cx="567" cy="461" r="17" fill="#0f55fb" stroke="#fff" strokeWidth="4" />

      <Ring x={520} y={669} />
      <Pin x={521} y={630} />
      <CarBadge x={530} y={712} />
      <CarBadge x={593} y={819} />
      <Ring x={817} y={899} />
      <Pin x={817} y={859} />
      <rect x="0" y="306" width="1080" height="22" fill="url(#top-shade)" />
    </svg>
  );
}

/* ---------- shared icons ---------- */

function Kebab() {
  return (
    <svg viewBox="0 0 12 44" className="h-[44px] w-[12px]" fill="#202124" aria-hidden="true">
      <circle cx="6" cy="6" r="5.500" />
      <circle cx="6" cy="22" r="5.500" />
      <circle cx="6" cy="38" r="5.500" />
    </svg>
  );
}

function CloudOff() {
  return (
    <svg viewBox="0 -960 960 960" className="size-[60px]" fill="#202124" aria-hidden="true">
      <path d="M792-56 686-160H260q-92 0-156-64T40-380q0-77 47.500-137T210-594q3-8 6-15.500t6-16.500L56-792l56-56 736 736-56 56ZM260-240h346L284-562q-2 11-3 21t-1 21h-20q-58 0-99 41t-41 99q0 58 41 99t99 41Zm604 30-58-56q17-14 25.500-32.500T840-340q0-42-29-71t-71-29h-60v-80q0-83-58.500-141.500T480-720q-27 0-52 6.500T380-693l-58-58q35-24 74.500-36.500T480-800q117 0 198.500 81.500T760-520q69 8 114.500 59.500T920-340q0 39-15 72.500T864-210Z" />
    </svg>
  );
}

function Bus() {
  return (
    <svg viewBox="0 0 46 51" className="h-[51px] w-[46px]" fill="#3c4043" aria-hidden="true">
      <path
        fillRule="evenodd"
        d="M11 0H35Q41 0 41 6V9H42Q46 9 46 13V37Q46 41 43 42V43H41V48Q41 51 38 51H37Q34 51 34 48V43H12V48Q12 51 9 51H8Q5 51 5 48V43H3V42Q0 41 0 37V13Q0 9 4 9H5V6Q5 0 11 0ZM11 5Q8 5 8 8V10H38V8Q38 5 35 5ZM6 16V28H40V16ZM6 33V38H13V33ZM33 33V38H40V33Z"
      />
    </svg>
  );
}

function PlaceDot() {
  return (
    <span className="flex size-[64px] shrink-0 items-center justify-center rounded-full bg-[#78909c]">
      <span className="size-5 rounded-full bg-white" />
    </span>
  );
}

function Connector({ className }: { className: string }) {
  return <span className={`w-[6px] bg-[#dadce0] ${className}`} />;
}

/* ---------- page ---------- */

const tabs = ["일", "여행", "통계", "장소", "도시", "세계"];

function Header() {
  return (
    <header className="relative z-10 flex shrink-0 flex-col border-t-2 border-[#cbcbcb] bg-white">
      <div className="grid h-[212px] grid-cols-[1fr_auto_1fr] items-center pr-[64px] pl-[44px]">
        <button aria-label="뒤로" className="justify-self-start text-[#202124]">
          <MdArrowBack size={62} />
        </button>
        <h1 className="pl-[20px] text-[49px] leading-none text-[#202124]">타임라인</h1>
        <div className="flex items-center gap-[96px] justify-self-end">
          <button aria-label="백업 꺼짐"><CloudOff /></button>
          <button aria-label="더보기" className="px-1"><Kebab /></button>
        </div>
      </div>
      <nav className="flex h-[92px] justify-between px-[57px] pb-[1px]" role="tablist">
        {tabs.map((t, i) => (
          <button
            key={t}
            role="tab"
            aria-selected={i === 0}
            className={
              i === 0
                ? "relative flex justify-center pt-[2px] text-[38px] leading-[54px] font-bold text-[#007b8b]"
                : "flex justify-center pt-[2px] text-[38px] leading-[54px] font-medium text-[#70757a]"
            }
          >
            {t}
            {i === 0 && <span className="absolute -bottom-px left-1/2 h-[7px] w-[63px] -translate-x-1/2 rounded-t-md bg-[#007b8b]" />}
          </button>
        ))}
      </nav>
    </header>
  );
}

function Scribbles() {
  return (
    <svg viewBox="152 1403 610 96" className="h-[96px] w-[610px]" aria-hidden="true">
      <g transform="translate(130 1395) scale(0.3333)">
        <path d="M78 90H90L92 104L116 114V117H78ZM126 117H138V128H126ZM150 120H160V124H150ZM126 58L138 56V62L126 64ZM150 55L162 53V58L150 60ZM185 56L230 46V50L190 60ZM254 45L266 43V48H254ZM298 43L345 41V45L298 48ZM368 39L382 38L378 44H368Z" fill="#202124" />
        <path d="M1636 118L1690 121V130L1636 125ZM1750 131L1770 129V133L1750 135ZM1810 120L1830 98L1850 85L1828 122Z" fill="#202124" />
        <g fill="none" stroke="#70757a" strokeWidth="8">
          <path d="M82 252V263L117 260M123 238V288M143 234V288M120 240L140 234" />
          <ellipse cx="195" cy="242" rx="19" ry="13" />
          <path d="M233 250V234H252M182 266H190" />
          <path d="M526 282H534M540 280V287M550 279V287M613 277V290M682 275Q712 300 742 275M834 268V290M928 267V288M990 266H1046V290M1115 265V290M418 288H426M1348 286L1366 283" />
        </g>
        <path d="M1400 204L1460 206V210Z M1600 210L1612 212V215Z M308 286H324M330 251H336M1260 288H1266M860 270H866" fill="#9aa0a6" />
      </g>
    </svg>
  );
}

function Timeline() {
  return (
    <ol className="flex min-h-0 flex-1 flex-col overflow-hidden">
      {/* departure */}
      <li className="grid shrink-0 grid-cols-[152px_1fr_auto] pr-[77px] pt-[28px]">
        <div className="flex flex-col items-center pt-[36px]">
          <PlaceDot />
          <Connector className="mt-[21px] h-[103px]" />
        </div>
        <div className="flex min-w-0 flex-col">
          <Scribbles />
          <p className="text-[35px] leading-[46px] text-[#70757a]">AM 8:08에 출발함</p>
        </div>
        <button aria-label="더보기" className="mt-[47px] self-start"><Kebab /></button>
      </li>

      {/* unknown transport */}
      <li className="grid shrink-0 grid-cols-[152px_1fr]">
        <div className="flex flex-col items-center pt-[15px] pl-[3px]">
          <MdHelpOutline size={75} className="shrink-0 text-[#c5372c]" />
          <Connector className="mt-[15px] mr-[3px] flex-1" />
        </div>
        <div className="flex flex-col pr-[21px] pb-[64px]">
          <div className="flex items-start justify-between pr-[56px]">
            <div>
              <h2 className="-mt-[20px] text-[39px] leading-[54px] font-bold text-[#c5372c]">알 수 없는 이동수단</h2>
              <p className="text-[35px] leading-[46px] text-[#70757a]">14km · 20분</p>
              <p className="text-[35px] leading-[46px] text-[#70757a]">AM 8:08~AM 8:28</p>
            </div>
            <button aria-label="더보기" className="mt-[32px]"><Kebab /></button>
          </div>
          <button className="mt-[33px] flex h-[104px] items-center gap-[30px] self-start rounded-full bg-[#007b8b] pr-[42px] pl-[34px] text-[39px] font-medium text-white">
            <svg viewBox="0 0 36 36" className="size-[36px]" stroke="#fff" strokeWidth="4" aria-hidden="true">
              <path d="M18 0V36M0 18H36" />
            </svg>
            이동수단 추가
          </button>
          <hr className="mt-[17px] h-[9px] border-0 bg-[#f1f3f3]" />
        </div>
      </li>

      {/* visited place */}
      <li className="grid shrink-0 grid-cols-[152px_1fr]">
        <div className="flex flex-col items-center pt-[22px]">
          <PlaceDot />
          <Connector className="mt-[20px] flex-1" />
        </div>
        <div className="pb-[58px]">
          <h2 className="-mt-[19px] text-[39px] leading-[54px] font-bold text-[#202124]">협성휴포레</h2>
          <p className="text-[35px] leading-[46px] text-[#70757a]">대구광역시</p>
          <p className="text-[35px] leading-[46px] text-[#70757a]">AM 8:28~AM 8:44</p>
        </div>
      </li>

      <li className="grid grid-cols-[152px_1fr]">
        <div className="flex flex-col items-center">
          <Connector className="h-[40px]" />
        </div>
        <h2 className="text-[39px] leading-[54px] font-bold text-[#202124]">유진</h2>
      </li>
    </ol>
  );
}

export default function App() {
  return (
    <div className={`relative flex h-screen flex-col overflow-hidden bg-white ${FONT}`} lang="ko">
      <Header />

      <div className="relative shrink-0">
        <MapView />
        <button aria-label="장소" className="absolute top-[41px] right-[53px] flex size-[106px] items-center justify-center rounded-full bg-white text-[#36393d] shadow-md shadow-black/30">
          <MdOutlineLocationOn size={69} />
        </button>
        <button aria-label="레이어 끄기" className="absolute right-[53px] bottom-[62px] flex size-[106px] items-center justify-center rounded-full bg-white text-[#36393d] shadow-md shadow-black/30">
          <MdOutlineLayersClear size={65} />
        </button>
      </div>

      <section className="relative -mt-[30px] flex min-h-0 flex-1 flex-col rounded-t-[30px] bg-white shadow-[0_-1px_5px_rgba(0,0,0,0.2)]">
        <div className="flex justify-center pt-[21px]">
          <span className="h-[10px] w-[63px] rounded-full bg-[#dadce0]" />
        </div>
        <div className="grid h-[168px] grid-cols-[1fr_auto_1fr] items-center px-[72px]">
          <button aria-label="이전 날짜" className="justify-self-start pt-[2px]">
            <svg viewBox="0 0 22 36" className="h-[36px] w-[22px]" fill="none" stroke="#202124" strokeWidth="5" aria-hidden="true">
              <path d="M20 2L4 18L20 34" />
            </svg>
          </button>
          <button className="flex items-center gap-[18px] pr-[18px] text-[44px] leading-[60px] font-medium text-[#202124]">
            오늘
            <svg viewBox="0 0 26 14" className="h-[14px] w-[26px]" fill="#202124" aria-hidden="true">
              <path d="M0 0H26L13 14Z" />
            </svg>
          </button>
        </div>

        <div className="flex min-h-0 flex-1">
          <div className="flex min-w-0 flex-1 flex-col">
            <div className="flex h-[131px] shrink-0 items-center border-t-[3px] border-b-2 border-[#e6e6e6] pl-[151px] text-[35px] leading-[46px] text-[#70757a]">
              <MdDirectionsCar size={70} className="text-[#3c4043]" />
              <div className="ml-[17px] w-[243px] pt-[3px]">
                <p>398km</p>
                <p>5시간 57분</p>
              </div>
              <Bus />
              <div className="ml-[29px] w-[135px] pt-[3px]">
                <p>2km</p>
                <p>15분</p>
              </div>
              <MdLocationOn size={62} className="text-[#202124]" />
              <p className="ml-[17px]">10회 방문</p>
            </div>
            <Timeline />
          </div>
          <div className="w-[16px] shrink-0 bg-[#f1f3f4]" aria-hidden="true">
            <div className="h-[180px] bg-[#80868b]" />
          </div>
        </div>
      </section>

      <button aria-label="수정" className="absolute right-[35px] bottom-[35px] flex size-[147px] items-center justify-center rounded-full bg-white shadow-[0_4px_16px_rgba(0,0,0,0.3)]">
        <svg viewBox="0 0 147 147" className="size-[147px]" aria-hidden="true">
          <path fillRule="evenodd" d="M49 87L83 53Q87 49 92 53L96 57Q99 62 95 66L62 98H49ZM55 89V93H60L85 68L80 63Z" fill="#007b8b" />
          <path d="M49 127L76 137" stroke="#222" strokeWidth="9" strokeLinecap="round" />
          <circle cx="77" cy="136" r="6" fill="#222" />
        </svg>
      </button>
      <div className="absolute inset-x-0 bottom-0 h-[2px] bg-[#a5d0d2]" aria-hidden="true" />
      <div className="absolute top-0 right-0 h-[1245px] w-px bg-[#9fc8d0]" aria-hidden="true" />
    </div>
  );
}
